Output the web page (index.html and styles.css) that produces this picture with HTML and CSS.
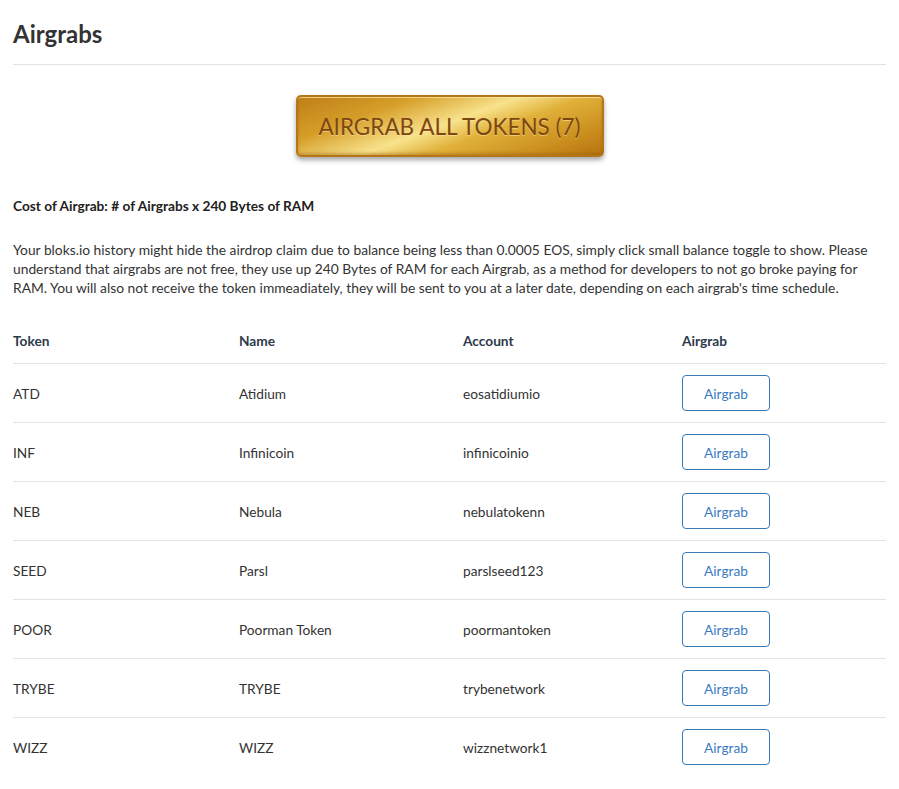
FILE: index.html
```html
<!DOCTYPE html>
<html lang="en">
<head>
    <meta charset="UTF-8">
    <title>Airgrabs</title>
    <link rel="stylesheet" href="styles.css">
</head>
<body>
    <div class="page">
        <h1 class="page-title">Airgrabs</h1>
        <div class="gold-wrap">
            <button class="gold-btn">AIRGRAB ALL TOKENS (7)</button>
        </div>
        <p class="cost">Cost of Airgrab: # of Airgrabs x 240 Bytes of RAM</p>
        <p class="note">
            Your bloks.io history might hide the airdrop claim due to balance being less than 0.0005 EOS, simply click small balance toggle to show. Please understand that airgrabs are not free, they use up 240 Bytes of RAM for each Airgrab, as a method for developers to not go broke paying for RAM. You will also not receive the token immeadiately, they will be sent to you at a later date, depending on each airgrab's time schedule.
        </p>
        <table class="grabs">
            <thead>
                <tr>
                    <th class="col-token">Token</th>
                    <th class="col-name">Name</th>
                    <th class="col-account">Account</th>
                    <th>Airgrab</th>
                </tr>
            </thead>
            <tbody>
                <tr><td>ATD</td><td>Atidium</td><td>eosatidiumio</td><td><button class="grab-btn">Airgrab</button></td></tr>
                <tr><td>INF</td><td>Infinicoin</td><td>infinicoinio</td><td><button class="grab-btn">Airgrab</button></td></tr>
                <tr><td>NEB</td><td>Nebula</td><td>nebulatokenn</td><td><button class="grab-btn">Airgrab</button></td></tr>
                <tr><td>SEED</td><td>Parsl</td><td>parslseed123</td><td><button class="grab-btn">Airgrab</button></td></tr>
                <tr><td>POOR</td><td>Poorman Token</td><td>poormantoken</td><td><button class="grab-btn">Airgrab</button></td></tr>
                <tr><td>TRYBE</td><td>TRYBE</td><td>trybenetwork</td><td><button class="grab-btn">Airgrab</button></td></tr>
                <tr><td>WIZZ</td><td>WIZZ</td><td>wizznetwork1</td><td><button class="grab-btn">Airgrab</button></td></tr>
            </tbody>
        </table>
    </div>
</body>
</html>
```

FILE: styles.css
```css
body {
    font-family: Lato, 'Open Sans', Arial, sans-serif;
    margin: 0;
    padding: 0;
    background: #fff;
    color: #333;
}
.page {
    padding: 0 13px;
}
.page-title {
    margin: 0;
    padding: 19px 0 15px 0;
    font-size: 24px;
    line-height: 30px;
    font-weight: 700;
    color: #333;
    border-bottom: 1px solid #e2e2e2;
}
.gold-wrap {
    display: flex;
    justify-content: center;
    padding: 30px 0 0 0;
}
.gold-btn {
    font-family: Lato, Arial, sans-serif;
    width: 308px;
    height: 62px;
    font-size: 22.5px;
    color: #7e4612;
    border: 2px solid #b5761a;
    border-radius: 5px;
    background: linear-gradient(160deg, #bf7f18 0%, #d59e28 25%, #f8e28c 48%, #e0b13a 62%, #c98c1c 85%, #b67412 100%);
    box-shadow: inset 0 1px 0 rgba(255, 240, 180, 0.7), inset 0 -2px 3px rgba(150, 90, 10, 0.4), 0 3px 5px rgba(0, 0, 0, 0.35);
    text-shadow: 0 1px 0 rgba(255, 230, 150, 0.6);
    cursor: pointer;
}
.cost {
    margin: 39px 0 0 0;
    font-size: 13.7px;
    line-height: 19px;
    font-weight: 700;
    color: #222;
}
.note {
    margin: 25px 0 0 0;
    font-size: 13.8px;
    line-height: 19px;
    color: #333;
}
.grabs {
    width: 100%;
    border-collapse: collapse;
    margin-top: 26px;
    font-size: 13.7px;
}
.grabs th {
    text-align: left;
    font-weight: 700;
    color: #2d3a4a;
    padding: 8px 0 13px 0;
    line-height: 19px;
    border-bottom: 1px solid #e4e4e4;
}
.grabs td {
    height: 58px;
    padding: 0;
    color: #333;
    border-bottom: 1px solid #e4e4e4;
}
.grabs tbody tr:last-child td {
    border-bottom: none;
}
.col-token {
    width: 226px;
}
.col-name {
    width: 224px;
}
.col-account {
    width: 219px;
}
.grab-btn {
    font-family: Lato, Arial, sans-serif;
    font-size: 13.7px;
    width: 88px;
    height: 36px;
    color: #3a7bbf;
    background: #fff;
    border: 1px solid #3a78b5;
    border-radius: 4px;
    cursor: pointer;
}
```
